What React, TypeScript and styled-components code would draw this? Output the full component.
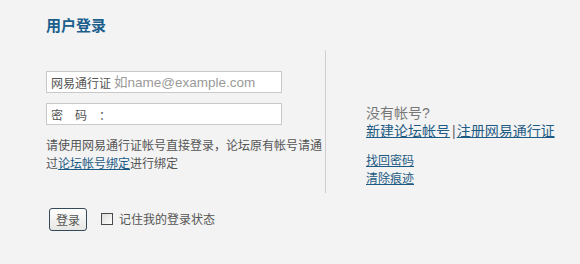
import React from "react";
import styled, { createGlobalStyle } from "styled-components";

const Global = createGlobalStyle`
  html, body {
    margin: 0;
    padding: 0;
    background: #f3f3f3;
  }
  body {
    font-family: "Liberation Sans", "Noto Sans CJK SC", sans-serif;
    font-size: 12px;
    color: #555;
  }
`;

const Page = styled.div`
  width: 580px;
  height: 264px;
  box-sizing: border-box;
  padding: 17px 0 0 46px;
  background: #f3f3f3;
`;

const Title = styled.h2`
  margin: 0;
  font-size: 15px;
  line-height: 18px;
  font-weight: bold;
  color: #1a5f8c;
`;

const Main = styled.div`
  display: flex;
  margin-top: 15px;
`;

const LeftPane = styled.div`
  width: 280px;
  box-sizing: border-box;
  padding: 21px 0 20px 0;
  border-right: 1px solid #cfcfcf;
`;

const Fields = styled.div`
  display: flex;
  flex-direction: column;
  gap: 10px;
  width: 236px;
`;

const Field = styled.label`
  display: flex;
  align-items: center;
  height: 22px;
  box-sizing: border-box;
  border: 1px solid #c9c9c9;
  background: #fff;
  padding-left: 4px;
`;

const FieldLabel = styled.span`
  font-size: 12px;
  color: #555;
  white-space: pre;
`;

const FieldInput = styled.input`
  flex: 1;
  min-width: 0;
  border: none;
  outline: none;
  background: transparent;
  padding: 0 0 0 3px;
  margin: 0;
  height: 18px;
  font-family: "Liberation Sans", "Noto Sans CJK SC", sans-serif;
  font-size: 13.5px;
  color: #555;
  &::placeholder {
    color: #9a9a9a;
  }
`;

const Note = styled.p`
  margin: 12px 0 0 0;
  font-size: 12px;
  line-height: 18px;
  color: #555;
`;

const Link = styled.a<{ $size?: number }>`
  color: #1d5b84;
  text-decoration: underline;
  font-size: ${(p) => p.$size ?? 12}px;
  cursor: pointer;
`;

const RightPane = styled.div`
  padding: 54px 0 0 40px;
  display: flex;
  flex-direction: column;
`;

const Hint = styled.div`
  font-size: 14px;
  line-height: 18px;
  color: #777;
`;

const LinkLine = styled.div<{ $size?: number }>`
  font-size: ${(p) => p.$size ?? 12}px;
  line-height: 18px;
  color: #555;
`;

const Sep = styled.span`
  margin: 0 1px 0 2px;
  color: #666;
`;

const Spacer = styled.div`
  height: 12px;
`;

const Actions = styled.div`
  display: flex;
  align-items: center;
  margin-top: 15px;
  padding-left: 3px;
`;

const Button = styled.button`
  width: 38px;
  height: 23px;
  box-sizing: border-box;
  border: 1px solid #34495a;
  border-radius: 3px;
  background: linear-gradient(#ffffff, #e6e6e2);
  font-family: "Liberation Sans", "Noto Sans CJK SC", sans-serif;
  font-size: 12px;
  color: #555;
  padding: 0;
  cursor: pointer;
`;

const Remember = styled.label`
  display: flex;
  align-items: center;
  margin-left: 14px;
  margin-top: -2px;
  font-size: 12px;
  color: #555;
  gap: 6px;
`;

const Box = styled.span`
  width: 12px;
  height: 12px;
  box-sizing: border-box;
  border: 1px solid #4a4a4a;
  background: linear-gradient(135deg, #dcdcd8, #ffffff);
`;

export default function App() {
  return (
    <>
      <Global />
      <Page>
        <Title>用户登录</Title>
        <Main>
          <LeftPane>
            <Fields>
              <Field>
                <FieldLabel>网易通行证</FieldLabel>
                <FieldInput placeholder="如name@example.com" />
              </Field>
              <Field>
                <FieldLabel>密　码　：</FieldLabel>
                <FieldInput type="password" />
              </Field>
            </Fields>
            <Note>
              请使用网易通行证帐号直接登录，论坛原有帐号请通过
              <Link>论坛帐号绑定</Link>进行绑定
            </Note>
          </LeftPane>
          <RightPane>
            <Hint>没有帐号?</Hint>
            <LinkLine $size={14}>
              <Link $size={14}>新建论坛帐号</Link>
              <Sep>|</Sep>
              <Link $size={14}>注册网易通行证</Link>
            </LinkLine>
            <Spacer />
            <LinkLine>
              <Link>找回密码</Link>
            </LinkLine>
            <LinkLine>
              <Link>清除痕迹</Link>
            </LinkLine>
          </RightPane>
        </Main>
        <Actions>
          <Button>登录</Button>
          <Remember>
            <Box />
            记住我的登录状态
          </Remember>
        </Actions>
      </Page>
    </>
  );
}
